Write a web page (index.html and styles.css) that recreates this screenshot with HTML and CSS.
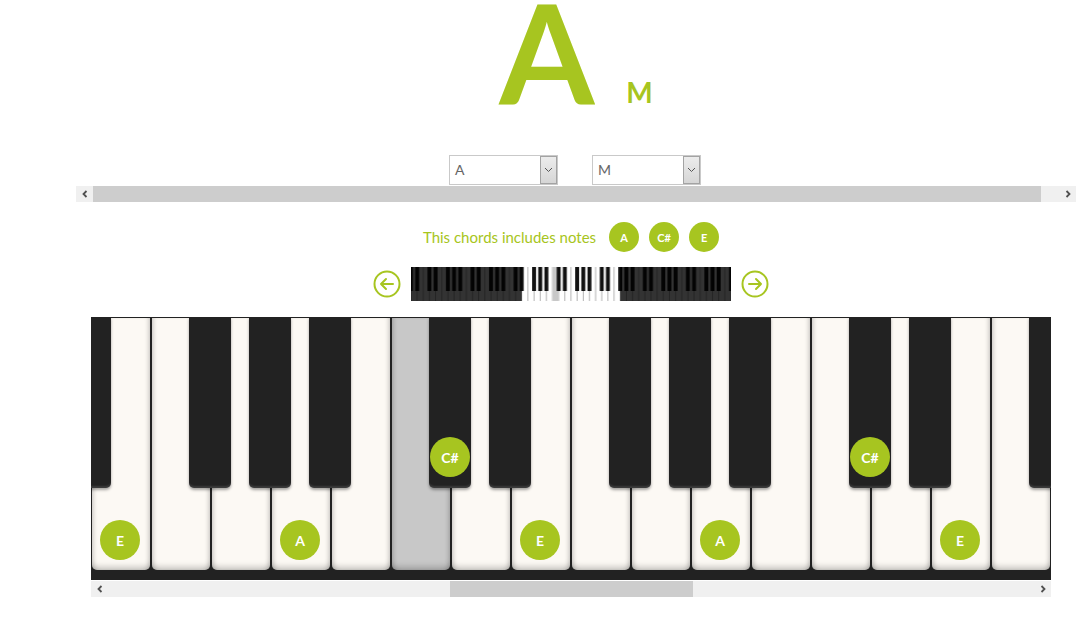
FILE: index.html
```html
<!DOCTYPE html>
<html>
<head>
<meta charset="utf-8">
<title>Chord</title>
<link rel="stylesheet" href="styles.css">
</head>
<body>
<div class="page">
  <div class="title"><span class="root">A</span><span class="quality">M</span></div>

  <div class="selects">
    <div class="select">
      <span class="select-value">A</span>
      <span class="select-btn"><svg width="9" height="6" viewBox="0 0 9 6"><path d="M1 1L4.5 4.5L8 1" fill="none" stroke="#555" stroke-width="1"/></svg></span>
    </div>
    <div class="select">
      <span class="select-value">M</span>
      <span class="select-btn"><svg width="9" height="6" viewBox="0 0 9 6"><path d="M1 1L4.5 4.5L8 1" fill="none" stroke="#555" stroke-width="1"/></svg></span>
    </div>
  </div>

  <div class="scrollbar top-scroll">
    <span class="sb-btn"><svg width="8" height="8" viewBox="0 0 8 8"><path d="M5.5 1L2.5 4L5.5 7" fill="none" stroke="#505050" stroke-width="1.8"/></svg></span>
    <span class="sb-thumb"></span>
    <span class="sb-track"></span>
    <span class="sb-btn"><svg width="8" height="8" viewBox="0 0 8 8"><path d="M2.5 1L5.5 4L2.5 7" fill="none" stroke="#505050" stroke-width="1.8"/></svg></span>
  </div>

  <div class="content">
    <div class="notes">
      <span class="notes-label">This chords includes notes</span>
      <span class="note">A</span>
      <span class="note">C#</span>
      <span class="note">E</span>
    </div>

    <div class="nav">
      <span class="nav-btn"><svg width="28" height="28" viewBox="0 0 28 28"><circle cx="14" cy="14" r="12.5" fill="none" stroke="#a7c520" stroke-width="2"/><path d="M20 14H8M13 9L8 14L13 19" fill="none" stroke="#a7c520" stroke-width="2" stroke-linecap="round" stroke-linejoin="round"/></svg></span>
      <svg class="mini" viewBox="0 0 52 34" preserveAspectRatio="none">
        <defs>
          <pattern id="wk" x="2" y="0" width="7" height="34" patternUnits="userSpaceOnUse">
            <rect x="0.08" y="0" width="0.84" height="34" fill="#fff"/>
            <rect x="1.08" y="0" width="0.84" height="34" fill="#fff"/>
            <rect x="2.08" y="0" width="0.84" height="34" fill="#fff"/>
            <rect x="3.08" y="0" width="0.84" height="34" fill="#fff"/>
            <rect x="4.08" y="0" width="0.84" height="34" fill="#fff"/>
            <rect x="5.08" y="0" width="0.84" height="34" fill="#fff"/>
            <rect x="6.08" y="0" width="0.84" height="34" fill="#fff"/>
          </pattern>
          <pattern id="bk" x="2" y="0" width="7" height="34" patternUnits="userSpaceOnUse">
            <rect x="0.68" y="0" width="0.64" height="24" fill="#111"/>
            <rect x="1.68" y="0" width="0.64" height="24" fill="#111"/>
            <rect x="3.68" y="0" width="0.64" height="24" fill="#111"/>
            <rect x="4.68" y="0" width="0.64" height="24" fill="#111"/>
            <rect x="5.68" y="0" width="0.64" height="24" fill="#111"/>
          </pattern>
        </defs>
        <rect x="0" y="0" width="52" height="34" fill="#b0b0b0"/>
        <rect x="0" y="0" width="52" height="34" fill="url(#wk)"/>
        <rect x="23.08" y="0" width="0.84" height="34" fill="#c8c8c8"/>
        <rect x="0" y="0" width="52" height="34" fill="url(#bk)"/>
        <rect x="0" y="0" width="18" height="34" fill="rgba(0,0,0,0.8)"/>
        <rect x="34" y="0" width="18" height="34" fill="rgba(0,0,0,0.8)"/>
      </svg>
      <span class="nav-btn"><svg width="28" height="28" viewBox="0 0 28 28"><circle cx="14" cy="14" r="12.5" fill="none" stroke="#a7c520" stroke-width="2"/><path d="M8 14H20M15 9L20 14L15 19" fill="none" stroke="#a7c520" stroke-width="2" stroke-linecap="round" stroke-linejoin="round"/></svg></span>
    </div>

    <div class="piano">
      <div class="whites">
        <div class="white"><div class="black edge"></div><span class="label">E</span></div>
        <div class="white"><div class="black"></div></div>
        <div class="white"><div class="black"></div></div>
        <div class="white"><div class="black"></div><span class="label">A</span></div>
        <div class="white"></div>
        <div class="white active"><div class="black"><span class="label">C#</span></div></div>
        <div class="white"><div class="black"></div></div>
        <div class="white"><span class="label">E</span></div>
        <div class="white"><div class="black"></div></div>
        <div class="white"><div class="black"></div></div>
        <div class="white"><div class="black"></div><span class="label">A</span></div>
        <div class="white"></div>
        <div class="white"><div class="black"><span class="label">C#</span></div></div>
        <div class="white"><div class="black"></div></div>
        <div class="white"><span class="label">E</span></div>
        <div class="white"><div class="black"></div></div>
      </div>
    </div>

    <div class="scrollbar bottom-scroll">
      <span class="sb-btn"><svg width="8" height="8" viewBox="0 0 8 8"><path d="M5.5 1L2.5 4L5.5 7" fill="none" stroke="#505050" stroke-width="1.8"/></svg></span>
      <span class="sb-gap"></span>
      <span class="sb-thumb"></span>
      <span class="sb-track"></span>
      <span class="sb-btn"><svg width="8" height="8" viewBox="0 0 8 8"><path d="M2.5 1L5.5 4L2.5 7" fill="none" stroke="#505050" stroke-width="1.8"/></svg></span>
    </div>
  </div>
</div>
</body>
</html>
```

FILE: styles.css
```css
* {
  box-sizing: border-box;
}

html,
body {
  margin: 0;
  padding: 0;
  background: #fff;
}

body {
  font-family: "Lato", "Open Sans", "Liberation Sans", sans-serif;
}

.page {
  width: 1000px;
  margin-left: 76px;
}

/* Title */
.title {
  height: 100px;
  padding-top: 4px;
  line-height: 96px;
  text-align: center;
  color: #a7c520;
  font-weight: 700;
  white-space: nowrap;
}

.root {
  font-size: 137px;
}

.quality {
  font-size: 28px;
  line-height: 1;
  margin-left: 32px;
  vertical-align: 2px;
}

/* Selects */
.selects {
  margin-top: 55px;
  display: flex;
  justify-content: center;
  gap: 34px;
  padding-right: 2px;
}

.select {
  width: 109px;
  height: 30px;
  border: 1px solid #c9c9c9;
  background: #fff;
  display: flex;
  align-items: stretch;
}

.select-value {
  flex: 1;
  padding-left: 5px;
  font-size: 14px;
  line-height: 28px;
  color: #666;
}

.select-btn {
  width: 17px;
  background: linear-gradient(#ececec, #d6d6d6);
  border: 1px solid #a3a3a3;
  display: flex;
  align-items: center;
  justify-content: center;
}

/* Fake scrollbars */
.scrollbar {
  display: flex;
  height: 16px;
  background: #f0f0f0;
}

.top-scroll {
  margin-top: 1px;
}

.sb-btn {
  width: 17px;
  flex: none;
  display: flex;
  align-items: center;
  justify-content: center;
}

.sb-thumb {
  background: #cdcdcd;
  flex: none;
}

.top-scroll .sb-thumb {
  width: 948px;
}

.sb-track {
  flex: 1;
}

.sb-gap {
  width: 342px;
  flex: none;
}

.bottom-scroll {
  margin-top: 1px;
}

.bottom-scroll .sb-thumb {
  width: 243px;
}

/* Content under the top scrollbar */
.content {
  width: 960px;
  margin-left: 15px;
}

.notes {
  margin-top: 20px;
  height: 30px;
  display: flex;
  align-items: center;
  justify-content: center;
}

.notes-label {
  font-size: 15px;
  color: #a7c520;
  margin-right: 3px;
}

.note {
  width: 30px;
  height: 30px;
  margin-left: 10px;
  border-radius: 50%;
  background: #a7c520;
  color: #fff;
  font-weight: 700;
  font-size: 11px;
  display: flex;
  align-items: center;
  justify-content: center;
}

.nav {
  margin-top: 15px;
  height: 34px;
  display: flex;
  align-items: center;
  justify-content: center;
  gap: 10px;
}

.nav-btn {
  width: 28px;
  height: 28px;
  display: block;
}

.nav-btn svg {
  display: block;
}

.mini {
  display: block;
  width: 320px;
  height: 34px;
}

/* Piano */
.piano {
  margin-top: 16px;
  height: 263px;
  background: #222;
  overflow: hidden;
}

.whites {
  display: flex;
  gap: 2px;
  padding: 1px 1px 10px 1px;
}

.white {
  position: relative;
  flex: none;
  width: 58px;
  height: 252px;
  background: #fcf9f4;
  border-radius: 0 0 5px 5px;
  box-shadow:
    inset 4px 0 5px -3px rgba(0, 0, 0, 0.2),
    inset -4px 0 5px -3px rgba(0, 0, 0, 0.2),
    inset 0 -6px 6px -3px rgba(0, 0, 0, 0.22);
}

.white.active {
  background: #c8c8c8;
}

.black {
  position: absolute;
  top: -1px;
  left: 37px;
  width: 42px;
  height: 171px;
  z-index: 2;
  background: #222;
  border-radius: 0 0 5px 5px;
  box-shadow:
    0 2px 3px rgba(0, 0, 0, 0.35),
    inset 0 -3px 2px -1px rgba(255, 255, 255, 0.12);
}

.black.edge {
  left: -23px;
}

.label {
  position: absolute;
  width: 40px;
  height: 40px;
  border-radius: 50%;
  background: #a7c520;
  color: #fff;
  font-weight: 700;
  font-size: 14px;
  display: flex;
  align-items: center;
  justify-content: center;
}

.white > .label {
  left: 8px;
  bottom: 10px;
}

.black > .label {
  left: 1px;
  bottom: 11px;
}
```
